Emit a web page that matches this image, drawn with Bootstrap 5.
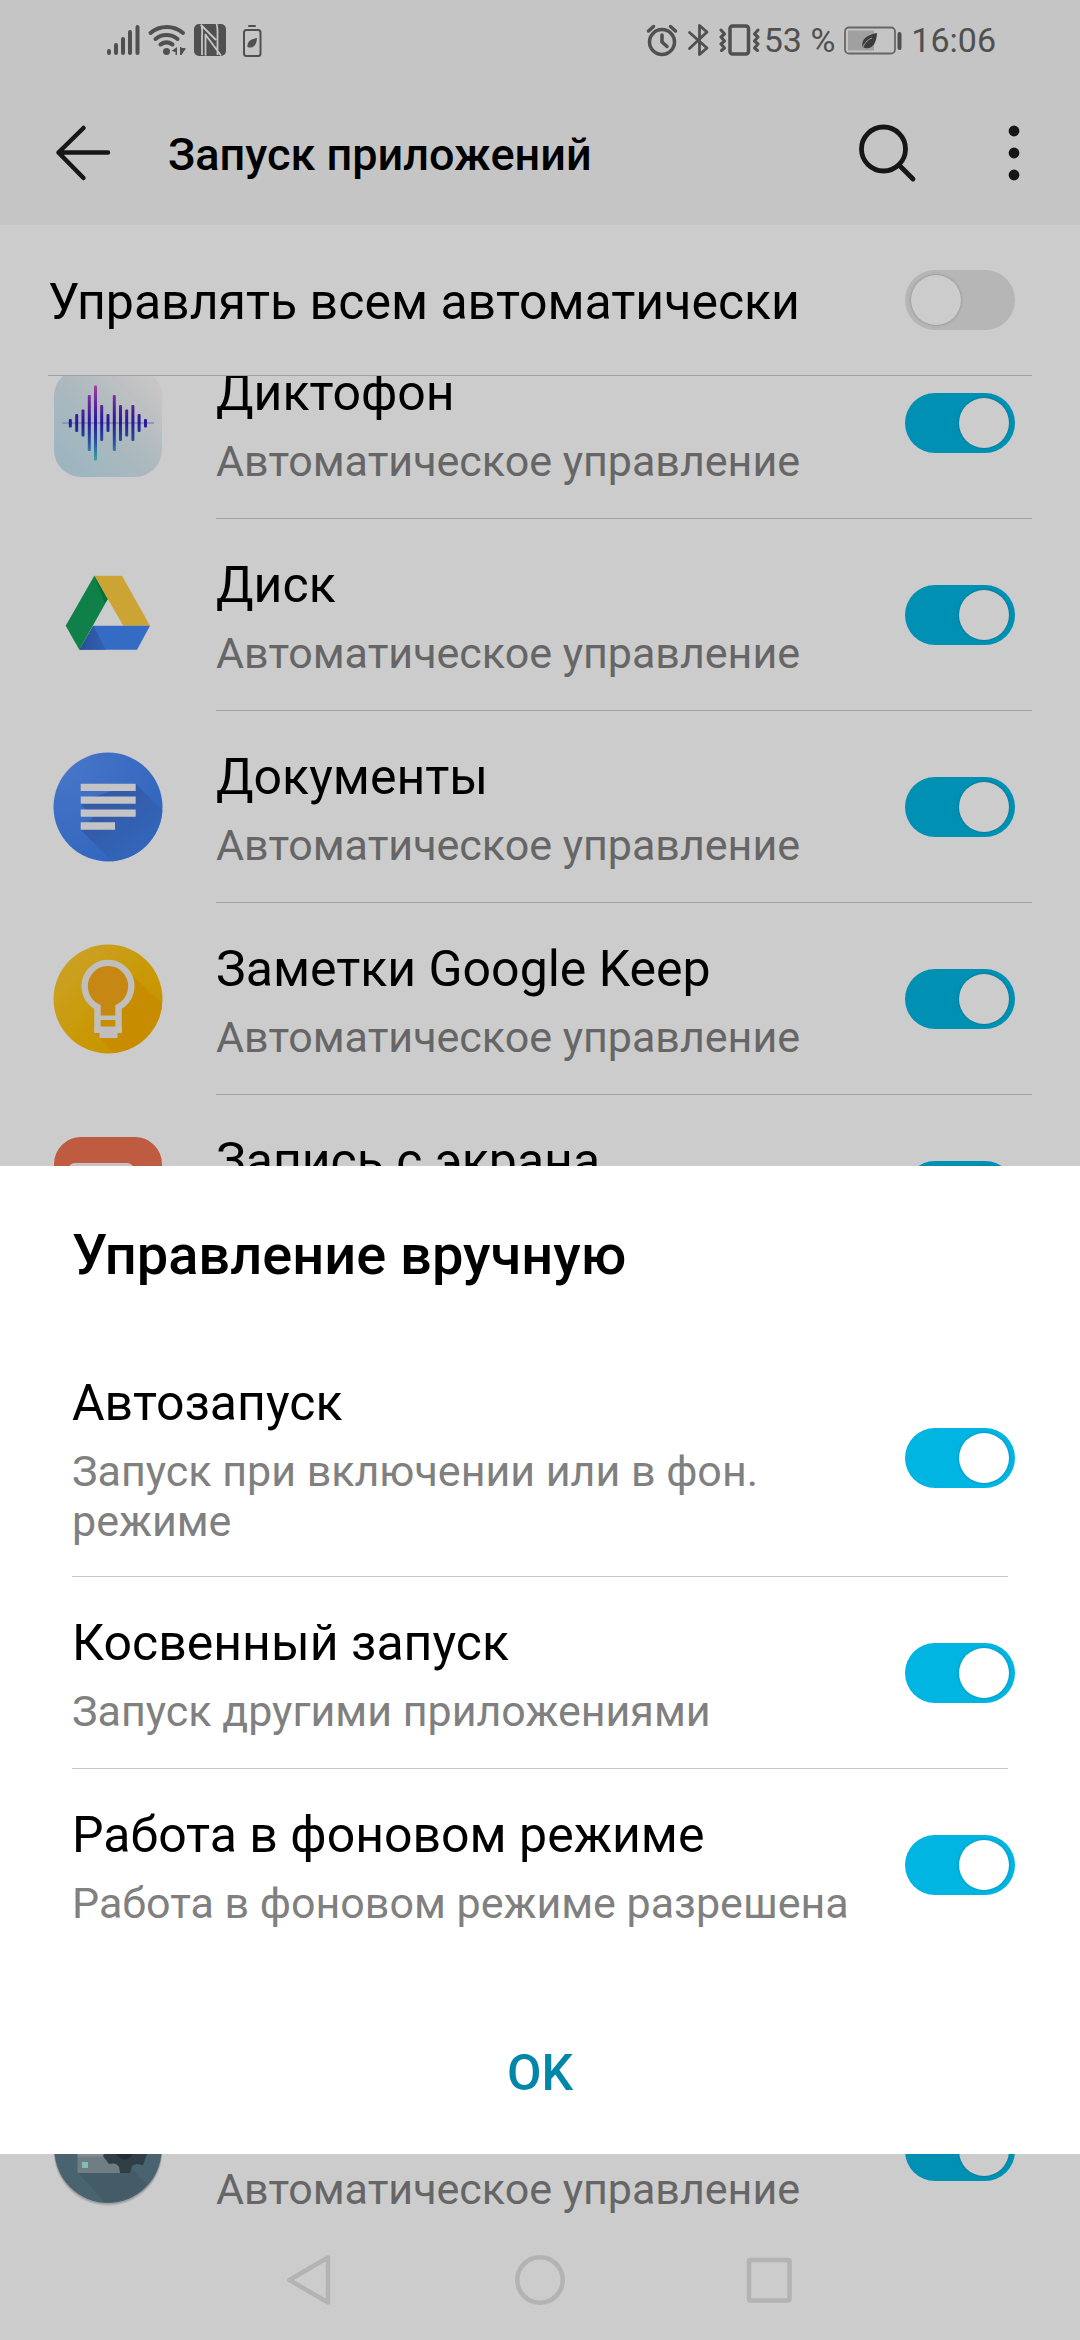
<!DOCTYPE html>
<html lang="ru">
<head>
<meta charset="utf-8">
<meta name="viewport" content="width=device-width, initial-scale=1">
<title>Запуск приложений</title>
<link href="https://cdn.jsdelivr.net/npm/bootstrap@5.3.0/dist/css/bootstrap.min.css" rel="stylesheet">
<style>
  body { font-family: Roboto, "Noto Sans", sans-serif; font-size: 50px; line-height: 56px; color: #000; background: #fff; }
  svg { display: block; flex: none; }
  ul { list-style: none; margin: 0; padding: 0; }
  .topbar { background: #f7f7f7; }
  .statusbar { padding: 18px 84px 18px 106px; height: 80px; color: #646464; font-size: 34px; line-height: 44px; }
  .appbar { height: 145px; padding: 0 44px 0 48px; color: #1c1c1c; }
  .appbar h1 { font-size: 45px; line-height: 52px; font-weight: 500; color: #000; margin: 0 0 0 50px; }
  .appbar .btn, .navkeys .btn { padding: 0; border: 0; }
  .appbar .btn + .btn { margin-left: 44px; }
  .master { margin: 0 48px; padding-right: 17px; height: 151px; border-bottom: 1px solid #c8c8c8; }
  .applist { min-height: 0; }
  .applist ul { margin: -49px 0 -27px; }
  .app-row { padding-left: 53px; }
  .app-body { margin-left: 53px; margin-right: 48px; padding-right: 17px; }
  .entry { min-height: 192px; gap: 24px; border-bottom: 1px solid #c8c8c8; }
  .entry-text { padding: 35px 0 30px; }
  .entry-title { display: block; min-height: 56px; }
  .entry-sub { display: block; margin-top: 15px; font-size: 43px; line-height: 50px; color: #808080; }
  .toggle.form-check-input { flex: none; position: relative; width: 110px; height: 60px; margin: 0; border: 0; border-radius: 30px; background: #e4e4e4; }
  .toggle.form-check-input::before { content: ""; position: absolute; left: 6px; top: 5px; width: 50px; height: 50px; border-radius: 50%; background: #fff; box-shadow: 0 0 3px rgba(0,0,0,.25); }
  .toggle.form-check-input:checked { background: #00b5e2; }
  .toggle.form-check-input:checked::before { left: 54px; }
  .navkeys { height: 120px; background: #fff; z-index: 1; }
  .navkeys .btn { width: 230px; }
  .navkeys svg { margin: auto; }
  .scrim { background: rgba(0,0,0,.2); z-index: 2; }
  .sheet { bottom: 186px; z-index: 3; background: #fff; padding: 57px 72px 53px; }
  .sheet h2 { font-size: 56px; line-height: 64px; font-weight: 500; margin: 0 0 53px; }
  .sheet li:last-child .entry { border-bottom: 0; }
  .sheet .toggle { margin-right: -7px; }
  .sheet .btn { display: block; margin-top: 84px; padding: 0; border: 0; font-size: 50px; line-height: 56px; font-weight: 500; color: #0086a8; }
</style>
</head>
<body>
<div class="position-relative vh-100 d-flex flex-column overflow-hidden">
  <header class="topbar">
    <div class="statusbar d-flex align-items-center">
      <svg width="156" height="36" viewBox="106 22 156 36" fill="#646464" stroke="none" aria-hidden="true">
        <g stroke="#646464" stroke-width="4" stroke-linecap="round"><path d="M109 51v2M116 45v8M123 39v14M130 32v21M137.500 27v26"/></g>
        <g fill="none" stroke="#646464" stroke-width="4" stroke-linecap="round"><path d="M150.500 33a25 25 0 0 1 32.500 0M155.500 39a17.500 17.500 0 0 1 22 0M160.500 44.500a10.500 10.500 0 0 1 12 0"/></g>
        <circle cx="166.500" cy="51.500" r="3.500"/>
        <path d="M177 47v8h-1.500v-3l-4-1zM180 47v8h1.500l4-6v-1h-4v-1z"/>
        <rect x="194" y="24" width="32" height="32" rx="5"/>
        <path d="M201 24.500C203 28 202 32 202 38v17M201 25l15 15M205.500 34v21.500M205 34l16 21.500M216.500 24c1.500 4 1 9 1 14v17" fill="none" stroke="#f7f7f7" stroke-width="1.800"/>
        <g fill="none" stroke="#646464" stroke-width="2"><rect x="244" y="30" width="16.500" height="26" rx="2.500"/><path d="M249 26h6" stroke-linecap="round"/></g>
        <path d="M257 38c-6 1-10 3-9.500 9 6 2 9-2 9.500-9z"/>
      </svg>
      <svg class="ms-auto" width="114" height="36" viewBox="645 22 114 36" fill="none" stroke="#646464" stroke-width="3.500" stroke-linecap="round" stroke-linejoin="round" aria-hidden="true">
        <circle cx="661" cy="42" r="12.500"/><path d="M661 35v7l5 4.500M647.500 31l5-4.500M674.500 31l-5-4.500"/>
        <path stroke-width="2.800" d="M688.500 32.500 706 48l-7.500 6.500v-29L706 32l-17.500 16.500"/>
        <rect x="729" y="26" width="18.500" height="28" rx="2.500"/>
        <path stroke-width="3" d="M720 30l3.500 4-3.500 3 3.500 4-3.500 3 3.500 4-3 2.500M757 30l-3.500 4 3.500 3-3.500 4 3.500 3-3.500 4 3 2.500"/>
      </svg>
      <span class="ms-1">53 %</span>
      <svg class="ms-2" width="60" height="36" viewBox="843 22 60 36" aria-hidden="true">
        <rect x="845" y="27.500" width="50" height="26" rx="4" fill="none" stroke="#808080" stroke-width="1.800"/>
        <rect x="848" y="30.500" width="26" height="20" fill="#c9c9c9"/>
        <path d="M899.500 34v14" stroke="#646464" stroke-width="4" stroke-linecap="round"/>
        <path d="M877 33c-10 2-16 6-14.500 14 8 4 14-2 14.500-14z" fill="#4c4c4c"/><path d="M863 47c2-5 6-8 9-9" fill="none" stroke="#c9c9c9"/>
      </svg>
      <span class="ms-2">16:06</span>
    </div>
    <div class="appbar d-flex align-items-center">
      <button class="btn" type="button" aria-label="Назад">
        <svg width="70" height="70" viewBox="48 118 70 70" fill="none" stroke="#1c1c1c" stroke-width="4.500" stroke-linecap="round" stroke-linejoin="round"><path d="M83.500 128 58.500 152.500 83.500 178M58.500 152.500h49.500"/></svg>
      </button>
      <h1 class="pt-1">Запуск приложений</h1>
      <button class="btn ms-auto" type="button" aria-label="Поиск">
        <svg width="70" height="70" viewBox="852 118 70 70" fill="none" stroke="#1c1c1c" stroke-width="4.800" stroke-linecap="round"><circle cx="883.500" cy="149" r="22"/><path d="M899.500 165.500l13.500 13.500"/></svg>
      </button>
      <button class="btn" type="button" aria-label="Ещё">
        <svg width="70" height="70" viewBox="966 118 70 70" fill="#1c1c1c"><circle cx="1014" cy="131" r="5.400"/><circle cx="1014" cy="153" r="5.400"/><circle cx="1014" cy="175" r="5.400"/></svg>
      </button>
    </div>
  </header>

  <div class="master d-flex align-items-center justify-content-between flex-shrink-0">
    <label class="pt-1" for="all">Управлять всем автоматически</label>
    <input class="form-check-input toggle" type="checkbox" role="switch" id="all">
  </div>

  <main class="applist flex-grow-1 overflow-hidden d-flex flex-column">
    <ul class="d-flex flex-column flex-grow-1">
      <li class="app-row d-flex align-items-center">
        <svg width="110" height="110" viewBox="0 0 110 110" aria-hidden="true">
          <defs>
            <linearGradient id="recBg" x1="0" y1="1" x2="1" y2="0"><stop offset="0" stop-color="#bfe2f2"/><stop offset=".5" stop-color="#d8e8ee"/><stop offset=".9" stop-color="#fbf7f8"/></linearGradient>
            <linearGradient id="recBar" gradientUnits="userSpaceOnUse" x1="0" y1="17" x2="0" y2="93"><stop offset="0" stop-color="#d848d0"/><stop offset=".3" stop-color="#6a2bc4"/><stop offset=".5" stop-color="#3020c0"/><stop offset=".75" stop-color="#3468c8"/><stop offset="1" stop-color="#48d0d0"/></linearGradient>
          </defs>
          <rect x="1" y="1" width="108" height="108" rx="27" fill="url(#recBg)"/>
          <path d="M9 55h92" stroke="#a9a6e4" stroke-width="1.500"/>
          <g fill="url(#recBar)">
            <rect x="15.800" y="51" width="3" height="8.500" rx="1"/><rect x="22.200" y="46" width="3" height="18" rx="1"/><rect x="28.500" y="41.500" width="3" height="27" rx="1"/><rect x="34.800" y="27" width="3" height="56" rx="1"/><rect x="41" y="17.500" width="3" height="75" rx="1"/><rect x="47.200" y="37" width="3" height="36" rx="1"/><rect x="53.500" y="46" width="3" height="18" rx="1"/><rect x="59.800" y="27" width="3" height="56" rx="1"/><rect x="66" y="37" width="3" height="36" rx="1"/><rect x="72.200" y="41.500" width="3" height="27" rx="1"/><rect x="78.400" y="37" width="3" height="36" rx="1"/><rect x="84.600" y="46" width="3" height="18" rx="1"/><rect x="91" y="51" width="3" height="8.500" rx="1"/>
          </g>
        </svg>
        <div class="app-body entry flex-grow-1 d-flex align-items-center justify-content-between">
          <label class="entry-text" for="a1"><span class="entry-title">Диктофон</span><span class="entry-sub">Автоматическое управление</span></label>
          <input class="form-check-input toggle" type="checkbox" role="switch" id="a1" checked>
        </div>
      </li>
      <li class="app-row d-flex align-items-center">
        <svg width="110" height="110" viewBox="0 0 110 110" aria-hidden="true">
          <defs><linearGradient id="fold" x1="0" y1="0" x2="1" y2="0"><stop offset="0" stop-color="#3462b8"/><stop offset="1" stop-color="#3e7ce4"/></linearGradient></defs>
          <path d="M41.300 15.700H69L97 65.700H70.300z" fill="#ffce41"/>
          <path d="M40.300 65.700H97L84 89.700H26.300z" fill="#4186f6"/>
          <path d="M40.300 65.700 53 89.700H26.300z" fill="url(#fold)"/>
          <path d="M41.300 15.700 54.700 39.300 26.300 89.700 12.700 65.700z" fill="#13a059"/>
          <path d="M41.300 15.700 54.700 39.300l-3 4z" fill="#0c8a48"/>
        </svg>
        <div class="app-body entry flex-grow-1 d-flex align-items-center justify-content-between">
          <label class="entry-text" for="a2"><span class="entry-title">Диск</span><span class="entry-sub">Автоматическое управление</span></label>
          <input class="form-check-input toggle" type="checkbox" role="switch" id="a2" checked>
        </div>
      </li>
      <li class="app-row d-flex align-items-center">
        <svg width="110" height="110" viewBox="0 0 110 110" aria-hidden="true">
          <defs>
            <radialGradient id="docBg" cx=".1" cy=".1" r="1"><stop offset="0" stop-color="#5a94fc"/><stop offset="1" stop-color="#3f80ee"/></radialGradient>
            <linearGradient id="docShade" x1="0" y1="0" x2="1" y2="1"><stop offset=".3" stop-color="#4072d0"/><stop offset=".8" stop-color="#4080ec"/></linearGradient>
            <clipPath id="disc"><circle cx="55" cy="55" r="54.500"/></clipPath>
          </defs>
          <circle cx="55" cy="55" r="54.500" fill="url(#docBg)"/>
          <path clip-path="url(#disc)" d="M82.700 31.700 112 61v50H61L27.700 77.700 40 65 27.700 52 40 45z" fill="url(#docShade)"/>
          <path d="M27.700 31.700h55V39h-55zM27.700 44.500h55v7.300h-55zM27.700 57.400h55v7.300h-55zM27.700 70.300H62v7.400H27.700z" fill="#f5f5f8"/>
        </svg>
        <div class="app-body entry flex-grow-1 d-flex align-items-center justify-content-between">
          <label class="entry-text" for="a3"><span class="entry-title">Документы</span><span class="entry-sub">Автоматическое управление</span></label>
          <input class="form-check-input toggle" type="checkbox" role="switch" id="a3" checked>
        </div>
      </li>
      <li class="app-row d-flex align-items-center">
        <svg width="110" height="110" viewBox="0 0 110 110" aria-hidden="true">
          <defs><linearGradient id="keepBg" x1="0" y1="0" x2="1" y2="1"><stop offset="0" stop-color="#ffce3c"/><stop offset=".55" stop-color="#fcbf06"/><stop offset="1" stop-color="#fab400"/></linearGradient></defs>
          <circle cx="55" cy="55" r="54.500" fill="url(#keepBg)"/>
          <path clip-path="url(#disc)" d="M75 28 112 62v50H64L42 89V64z" fill="#fbb000"/>
          <circle cx="55" cy="43.700" r="22" fill="#f8a918"/><path d="M47 62h16v12H47z" fill="#f8ab12"/>
          <path d="M44.500 88V63A23.300 23.300 0 1 1 65.500 63V88" fill="none" stroke="#f2efea" stroke-width="6.400"/>
          <path d="M44 71.500h22V76H44zM41.300 82.500h27.500v6.500H64.500v5h-18v-5h-5.200z" fill="#f2efea"/>
        </svg>
        <div class="app-body entry flex-grow-1 d-flex align-items-center justify-content-between">
          <label class="entry-text" for="a4"><span class="entry-title">Заметки Google Keep</span><span class="entry-sub">Автоматическое управление</span></label>
          <input class="form-check-input toggle" type="checkbox" role="switch" id="a4" checked>
        </div>
      </li>
      <li class="app-row d-flex align-items-center">
        <svg width="110" height="110" viewBox="0 0 110 110" aria-hidden="true">
          <rect x="1" y="1" width="108" height="108" rx="27" fill="#ef7251"/><rect x="15" y="27" width="66" height="56" rx="7" fill="#fbf4f2"/>
        </svg>
        <div class="app-body entry flex-grow-1 d-flex align-items-center justify-content-between">
          <label class="entry-text" for="a5"><span class="entry-title">Запись с экрана</span><span class="entry-sub">Автоматическое управление</span></label>
          <input class="form-check-input toggle" type="checkbox" role="switch" id="a5" checked>
        </div>
      </li>
      <li class="app-row d-flex align-items-center mt-auto">
        <svg width="110" height="110" viewBox="0 0 110 110" overflow="visible" aria-hidden="true">
          <circle cx="55" cy="55.500" r="54.500" fill="#000" opacity=".08"/><circle cx="55" cy="54.500" r="54" fill="#000" opacity=".15"/>
          <circle cx="55" cy="53.500" r="53.500" fill="#5c7d8c"/>
          <path d="M25 77 52 106a53 53 0 0 0 42-18L67 60z" fill="#567482"/>
          <path d="M24.500 35H67v42H24.500z" fill="#8c9ea6"/><path d="M24.500 35H67v25.500H24.500z" fill="#a3b1b8"/>
          <path d="M29 66h6v6h-6z" fill="#a4ecdc"/>
          <path d="M66 34h11l2 6 6-2 8 9-3 6 4 5-4 11-7-1-4 2-2 7H67l-1-6c-2-4-6-4-10-3l-6-8 3-6-3-6 5-9 7 2z" fill="#3d4f57"/>
          <circle cx="71.500" cy="55" r="8.500" fill="#2d3940"/>
        </svg>
        <div class="app-body entry flex-grow-1 d-flex align-items-center justify-content-between">
          <label class="entry-text" for="a6"><span class="entry-title"></span><span class="entry-sub">Автоматическое управление</span></label>
          <input class="form-check-input toggle" type="checkbox" role="switch" id="a6" checked>
        </div>
      </li>
    </ul>
  </main>

  <nav class="navkeys d-flex justify-content-center align-items-center flex-shrink-0">
    <button class="btn" type="button" aria-label="Назад"><svg width="54" height="54" viewBox="0 0 54 54" fill="none" stroke="#e0e0e0" stroke-width="4.500" stroke-linejoin="round"><path d="M6.500 27 45 4.500v45z"/></svg></button>
    <button class="btn" type="button" aria-label="Домой"><svg width="54" height="54" viewBox="0 0 54 54" fill="none" stroke="#e0e0e0" stroke-width="4.500"><circle cx="27" cy="27" r="22.700"/></svg></button>
    <button class="btn" type="button" aria-label="Недавние"><svg width="54" height="54" viewBox="0 0 54 54" fill="none" stroke="#e0e0e0" stroke-width="4.500" stroke-linejoin="round"><rect x="6" y="7" width="40.500" height="40.500" rx="1.500"/></svg></button>
  </nav>

  <div class="scrim position-absolute top-0 start-0 w-100 h-100"></div>

  <section class="sheet position-absolute start-0 w-100" role="dialog" aria-labelledby="sheetTitle">
    <h2 id="sheetTitle">Управление вручную</h2>
    <ul>
      <li><div class="entry d-flex align-items-center justify-content-between">
        <label class="entry-text" for="s1"><span class="entry-title">Автозапуск</span><span class="entry-sub">Запуск при включении или в фон. режиме</span></label>
        <input class="form-check-input toggle" type="checkbox" role="switch" id="s1" checked>
      </div></li>
      <li><div class="entry d-flex align-items-center justify-content-between">
        <label class="entry-text" for="s2"><span class="entry-title">Косвенный запуск</span><span class="entry-sub">Запуск другими приложениями</span></label>
        <input class="form-check-input toggle" type="checkbox" role="switch" id="s2" checked>
      </div></li>
      <li><div class="entry d-flex align-items-center justify-content-between">
        <label class="entry-text" for="s3"><span class="entry-title">Работа в фоновом режиме</span><span class="entry-sub">Работа в фоновом режиме разрешена</span></label>
        <input class="form-check-input toggle" type="checkbox" role="switch" id="s3" checked>
      </div></li>
    </ul>
    <button class="btn w-100" type="button">OK</button>
  </section>
</div>
<script src="https://cdn.jsdelivr.net/npm/bootstrap@5.3.0/dist/js/bootstrap.bundle.min.js"></script>
</body>
</html>
